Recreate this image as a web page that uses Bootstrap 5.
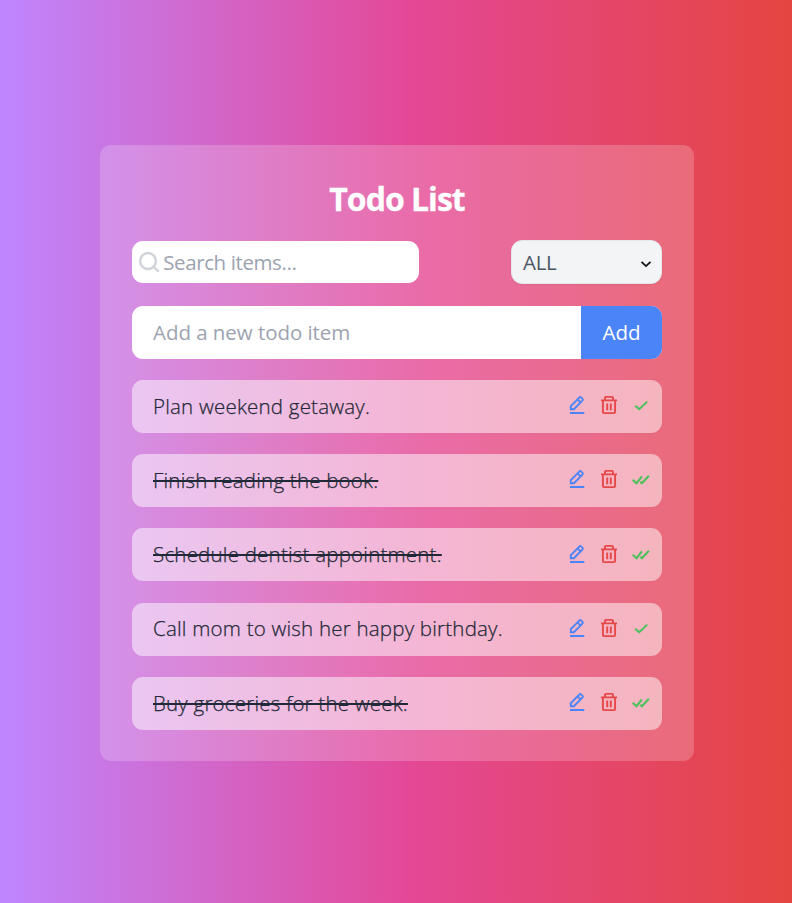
<!DOCTYPE html>
<html lang="en">
<head>
<meta charset="utf-8">
<meta name="viewport" content="width=device-width, initial-scale=1">
<title>Todo List</title>
<link rel="stylesheet" href="https://cdn.jsdelivr.net/npm/bootstrap@5.3.0/dist/css/bootstrap.min.css">
<style>
body{font-family:"Open Sans","Noto Sans",sans-serif;font-size:21.33px;line-height:32px;background:linear-gradient(90deg,#bf86ff,#e44896 52%,#e54540);padding-left:2px}
.panel{width:594px;height:616px;padding:32px;border-radius:11px;background:rgba(255,255,255,.2);margin-top:3px}
.title{font-size:32px;line-height:43px;font-weight:700;letter-spacing:-1px;margin-bottom:20px;-webkit-text-stroke:.3px #fff}
.search{width:287px;height:42px;border-radius:11px;padding-left:6px}
.field{border:0;outline:0;background:transparent;padding:0;min-width:0;font-size:20.5px}
.field::placeholder{color:#9ca3af;opacity:1}
.search .field{letter-spacing:-.4px;margin-left:3px}
.filter{width:151px;height:44px;border-radius:11px;background:#f3f4f6;border:1px solid #e5e7eb;padding:0 9px 0 11px;color:#4b5563;font-size:20.5px;box-shadow:0 1px 2px rgba(0,0,0,.05)}
.filter span{letter-spacing:-.3px}
.adder{height:53px;border-radius:11px;margin-top:22px;margin-bottom:21px}
.adder .field{padding:0 0 2px 21px;letter-spacing:-.05px}
.add-btn{width:81px;background:#4b84f7;color:#fff;border-radius:0;border:0;font-size:20.5px;padding:0 0 2px}
.todos{gap:21.2px}
.todo{height:53px;border-radius:11px;background:rgba(255,255,255,.5);padding-left:21px;padding-right:10px;color:#1f2937}
.todo-text{font-weight:300;font-size:20.5px;letter-spacing:.21px;white-space:nowrap;padding-bottom:1.5px;-webkit-text-stroke:.25px #1f2937}
.done{text-decoration:line-through;text-decoration-thickness:2px}
.actions{gap:10px;margin-top:-2.6px}
.actions svg{width:22px;height:22px;display:block;fill:none;stroke-width:1.9}
.edit{stroke:#4b84f7}.trash{stroke:#e64848}.tick{stroke:#48c159}
</style>
</head>
<body class="d-flex align-items-center justify-content-center vh-100 overflow-hidden">
<svg width="0" height="0" class="position-absolute">
<symbol id="pencil" viewBox="0 0 22 22"><path d="M4 19h14.3M4.8 15.2v-3.1l8.5-8.5q1-1 2 0l1.1 1.1q1 1 0 2l-8.5 8.5zM11.5 5.4l3.1 3.1"/></symbol>
<symbol id="bin" viewBox="0 0 22 22"><path d="M3 6.4h16M7 6.3V3.8q0-.9.9-.9h6.2q.9 0 .9.9v2.5M4.9 6.5v11.6q0 1 1 1h10.2q1 0 1-1V6.5M9.2 9.6v6.7M12.8 9.6v6.7"/></symbol>
<symbol id="check" viewBox="0 0 22 22"><path stroke-width="2" d="M5.3 11.7 9.2 15.2l8-7.6"/></symbol>
<symbol id="checks" viewBox="0 0 22 22"><path stroke-width="2" d="M2.7 11.7l3.9 3.5 5.3-6.8M10.4 13.7l1.5 1.5 7-7.4"/></symbol>
</svg>
<main class="panel">
<h1 class="title text-white text-center">Todo List</h1>
<div class="d-flex justify-content-between align-items-center">
<div class="search d-flex align-items-center bg-white">
<svg width="23" height="24" viewBox="0 0 23 24" fill="none" stroke="#d1d5db" stroke-width="2.6"><circle cx="10.3" cy="11" r="8.2"/><path d="m16 17 5.5 5"/></svg>
<input class="field flex-grow-1" type="text" placeholder="Search items..." aria-label="Search items">
</div>
<button class="filter d-flex align-items-center justify-content-between" type="button"><span>ALL</span>
<svg width="12" height="8" viewBox="0 0 12 8" fill="none" stroke="#111" stroke-width="1.8" class="mt-1"><path d="m1.5 1.8 4.5 4.3 4.5-4.3"/></svg></button>
</div>
<div class="adder d-flex bg-white overflow-hidden">
<input class="field flex-grow-1" type="text" placeholder="Add a new todo item" aria-label="New item">
<button class="add-btn" type="button">Add</button>
</div>
<div class="todos d-flex flex-column">
<div class="todo d-flex align-items-center justify-content-between"><span class="todo-text">Plan weekend getaway.</span><div class="actions d-flex"><svg class="edit"><use href="#pencil"/></svg><svg class="trash"><use href="#bin"/></svg><svg class="tick"><use href="#check"/></svg></div></div>
<div class="todo d-flex align-items-center justify-content-between"><span class="todo-text done">Finish reading the book.</span><div class="actions d-flex"><svg class="edit"><use href="#pencil"/></svg><svg class="trash"><use href="#bin"/></svg><svg class="tick"><use href="#checks"/></svg></div></div>
<div class="todo d-flex align-items-center justify-content-between"><span class="todo-text done">Schedule dentist appointment.</span><div class="actions d-flex"><svg class="edit"><use href="#pencil"/></svg><svg class="trash"><use href="#bin"/></svg><svg class="tick"><use href="#checks"/></svg></div></div>
<div class="todo d-flex align-items-center justify-content-between"><span class="todo-text">Call mom to wish her happy birthday.</span><div class="actions d-flex"><svg class="edit"><use href="#pencil"/></svg><svg class="trash"><use href="#bin"/></svg><svg class="tick"><use href="#check"/></svg></div></div>
<div class="todo d-flex align-items-center justify-content-between"><span class="todo-text done">Buy groceries for the week.</span><div class="actions d-flex"><svg class="edit"><use href="#pencil"/></svg><svg class="trash"><use href="#bin"/></svg><svg class="tick"><use href="#checks"/></svg></div></div>
</div>
</main>
<script src="https://cdn.jsdelivr.net/npm/bootstrap@5.3.0/dist/js/bootstrap.bundle.min.js"></script>
</body>
</html>
